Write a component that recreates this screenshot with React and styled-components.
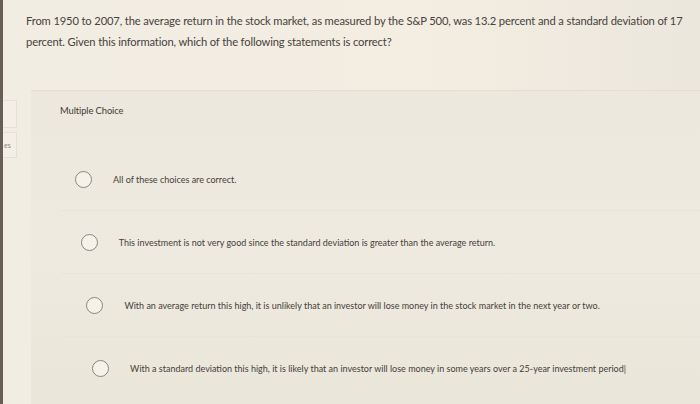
import React from 'react';
import styled, { createGlobalStyle } from 'styled-components';

const GlobalStyle = createGlobalStyle`
  html, body {
    margin: 0;
    padding: 0;
    background: #f1ebe0;
  }
`

const Screen = styled.div`
  width: 700px;
  height: 404px;
  box-sizing: border-box;
  border-left: 3px solid #665e57;
  background: linear-gradient(90deg, #f2ede3 0%, #f3ede2 60%, #ece7dc 100%);
  font-family: Lato, "Open Sans", sans-serif;
  display: flex;
  flex-direction: column;
  overflow: hidden;
`

const Question = styled.p`
  margin: 0;
  padding: 10px 0 0 23px;
  font-size: 11.2px;
  line-height: 21px;
  color: #47423d;
  letter-spacing: -0.14px;
  white-space: nowrap;
`

const Body = styled.div`
  display: flex;
  margin-top: 38px;
  flex: 1;
`

const Sidebar = styled.div`
  width: 14px;
  display: flex;
  flex-direction: column;
  padding-top: 10px;
`

const SideTab = styled.div`
  height: ${p => p.h}px;
  border: 1px solid #e6e0d5;
  border-left: none;
  background: #f4efe6;
  font-size: 7px;
  color: #8c857d;
  display: flex;
  align-items: center;
  padding-left: 1px;
  margin-bottom: 4px;
`

const Card = styled.section`
  flex: 1;
  margin-left: 14px;
  border-top: 1px solid #e4ded2;
  background: linear-gradient(180deg, #ede8dd 0%, #efeadf 50%, #ebe6da 100%);
  padding: 14px 0 0 29px;
`

const Label = styled.div`
  font-size: 9.4px;
  color: #3f3a36;
  letter-spacing: -0.1px;
  margin-bottom: 31px;
`

const OptionList = styled.ol`
  list-style: none;
  margin: 0;
  padding: 0;
`

const Option = styled.li`
  height: 63px;
  display: flex;
  align-items: center;
  padding-left: ${p => p.indent}px;
  border-top: 1px solid ${p => (p.first ? 'transparent' : '#e9e4d9')};
  box-sizing: border-box;
`

const Radio = styled.span`
  width: 15px;
  height: 15px;
  border-radius: 50%;
  border: 1.5px solid #8b8580;
  background: #f6f2ea;
  flex-shrink: 0;
`

const OptionText = styled.span`
  margin-left: 21px;
  font-size: 9px;
  color: #45403b;
  white-space: nowrap;
`

const options = [
  'All of these choices are correct.',
  'This investment is not very good since the standard deviation is greater than the average return.',
  'With an average return this high, it is unlikely that an investor will lose money in the stock market in the next year or two.',
  'With a standard deviation this high, it is likely that an investor will lose money in some years over a 25-year investment period|',
]

const App = () => (
  <>
    <GlobalStyle />
    <Screen>
      <Question>
        From 1950 to 2007, the average return in the stock market, as measured by the S&amp;P 500, was 13.2 percent and a standard deviation of 17
        <br />
        percent. Given this information, which of the following statements is correct?
      </Question>
      <Body>
        <Sidebar>
          <SideTab h={26} />
          <SideTab h={24}>es</SideTab>
        </Sidebar>
        <Card>
          <Label>Multiple Choice</Label>
          <OptionList>
            {options.map((text, i) => (
              <Option key={i} first={i === 0} indent={15 + i * 5.7}>
                <Radio />
                <OptionText>{text}</OptionText>
              </Option>
            ))}
          </OptionList>
        </Card>
      </Body>
    </Screen>
  </>
)

export default App;
